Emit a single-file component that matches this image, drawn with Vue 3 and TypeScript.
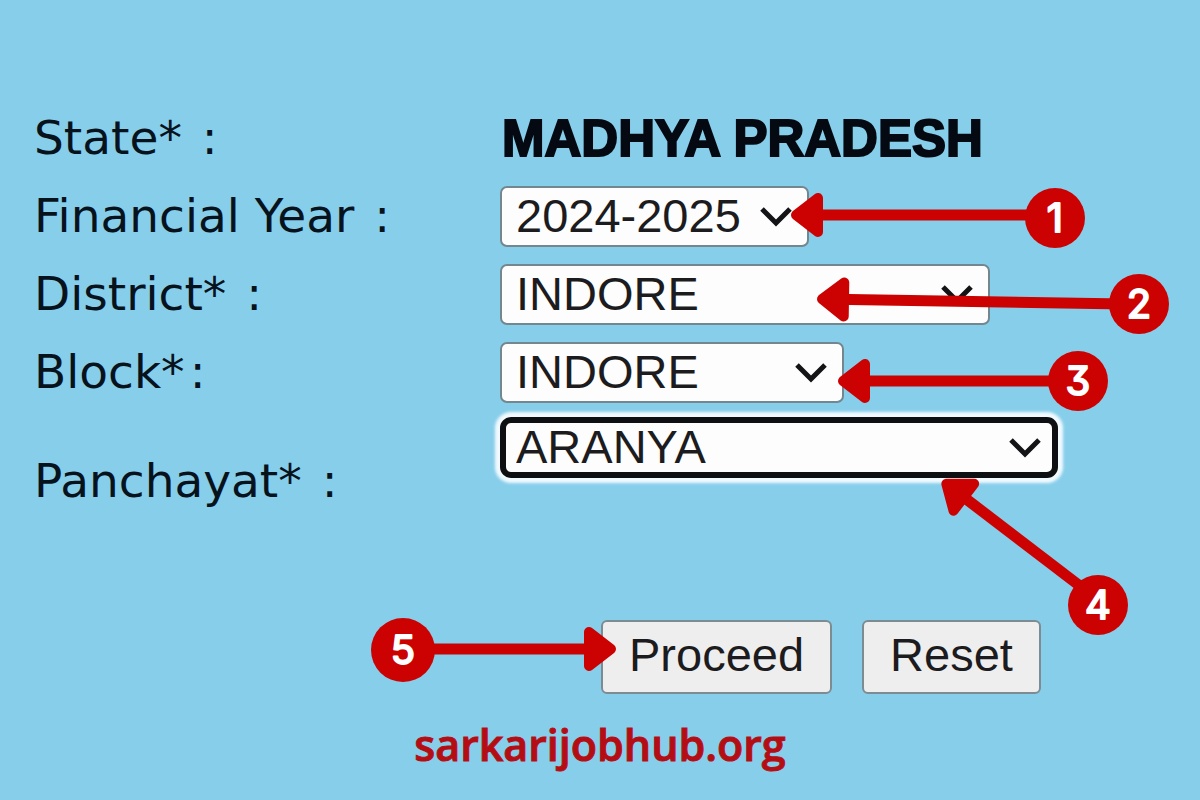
<script setup lang="ts">
import { reactive } from 'vue'

interface Field {
  id: string
  label: string
  size: string
  options: string[]
}

interface Callout {
  step: number
  cx: number
  cy: number
  r: number
  tipX: number
  tipY: number
  tailX: number
  tailY: number
}

const fields: Field[] = [
  { id: 'year', label: 'Financial Year ', size: 'small', options: ['2024-2025'] },
  { id: 'district', label: 'District* ', size: 'large', options: ['INDORE'] },
  { id: 'block', label: 'Block*', size: 'medium', options: ['INDORE'] },
  { id: 'panchayat', label: 'Panchayat* ', size: 'full', options: ['ARANYA'] },
]

const values = reactive<Record<string, string>>({
  year: '2024-2025',
  district: 'INDORE',
  block: 'INDORE',
  panchayat: 'ARANYA',
})

const callouts: Callout[] = [
  { step: 1, cx: 1055, cy: 218, r: 30, tipX: 788, tipY: 215, tailX: 1040, tailY: 215 },
  { step: 2, cx: 1139, cy: 304, r: 30, tipX: 814, tipY: 299, tailX: 1125, tailY: 304 },
  { step: 3, cx: 1078, cy: 381, r: 30, tipX: 835, tipY: 381, tailX: 1060, tailY: 381 },
  { step: 4, cx: 1098, cy: 605, r: 30, tipX: 940, tipY: 479, tailX: 1080, tailY: 586 },
  { step: 5, cx: 403, cy: 650, r: 32, tipX: 619, tipY: 649, tailX: 420, tailY: 649 },
]

function length(c: Callout): number {
  return Math.hypot(c.tailX - c.tipX, c.tailY - c.tipY)
}

function placement(c: Callout): string {
  const angle = (Math.atan2(c.tailY - c.tipY, c.tailX - c.tipX) * 180) / Math.PI
  return `translate(${c.tipX} ${c.tipY}) rotate(${angle})`
}
</script>

<template>
  <main class="page">
    <form class="form" @submit.prevent>
      <div class="row">
        <span class="label">State* <span class="colon">:</span></span>
        <strong class="state">MADHYA PRADESH</strong>
      </div>
      <div v-for="f in fields" :key="f.id" class="row" :class="{ last: f.id === 'panchayat' }">
        <label class="label" :for="f.id">{{ f.label }}<span class="colon">:</span></label>
        <div class="control" :class="f.size">
          <select :id="f.id" v-model="values[f.id]" class="select">
            <option v-for="o in f.options" :key="o">{{ o }}</option>
          </select>
          <svg class="chevron" viewBox="0 0 32 20" aria-hidden="true">
            <path d="M2 2 L16 16 L30 2" />
          </svg>
        </div>
      </div>
      <div class="actions">
        <button type="submit" class="button">Proceed</button>
        <button type="reset" class="button">Reset</button>
      </div>
    </form>
    <footer class="footer">sarkarijobhub.org</footer>

    <svg class="callouts" width="1200" height="800" viewBox="0 0 1200 800">
      <g v-for="c in callouts" :key="c.step">
        <g :transform="placement(c)">
          <line class="shaft" x1="20" y1="0" :x2="length(c)" y2="0" />
          <path class="head" d="M8 0 L30 -17 V17 Z" />
        </g>
        <circle class="disc" :cx="c.cx" :cy="c.cy" :r="c.r" />
        <text class="digit" :x="c.cx" :y="c.cy + 14">{{ c.step }}</text>
      </g>
    </svg>
  </main>
</template>

<style>
body {
  margin: 0;
  background: #87ceeb;
}
</style>

<style scoped>
.page {
  position: relative;
  box-sizing: border-box;
  min-height: 100vh;
  padding-top: 108px;
  background: #87ceeb;
  font-family: "Liberation Sans", Arial, sans-serif;
}

.form {
  display: flex;
  flex-direction: column;
  gap: 17px;
  padding-left: 34px;
}

.row {
  display: grid;
  grid-template-columns: 466px 1fr;
  align-items: center;
  min-height: 61px;
}

.row.last {
  min-height: 95px;
  margin-top: -3px;
  align-items: start;
}

.row.last .label {
  align-self: end;
}

.label {
  padding-bottom: 2px;
  color: #06121c;
  font: 47px/59px "DejaVu Sans", Verdana, sans-serif;
  white-space: nowrap;
}

.colon {
  padding: 0 5px;
}

.state {
  padding-left: 2px;
  color: #050a12;
  font-size: 51px;
  line-height: 61px;
  white-space: nowrap;
  -webkit-text-stroke: 2px #050a12;
}

.control {
  position: relative;
  height: 61px;
}

.small {
  width: 309px;
}

.medium {
  width: 344px;
}

.large {
  width: 490px;
}

.full {
  width: 558px;
}

.select {
  appearance: none;
  display: block;
  box-sizing: border-box;
  width: 100%;
  height: 100%;
  margin: 0;
  padding: 0 14px 2px;
  border: 2px solid #74868e;
  border-radius: 7px;
  background: #fdfdfd;
  color: #1c1c20;
  font: 47px/54px "Liberation Sans", Arial, sans-serif;
}

.full .select {
  padding: 0 10px 2px;
  border: 6px solid #0e0f12;
  border-radius: 11px;
  line-height: 46px;
  box-shadow: 0 0 3px 5px #f1fafe;
}

.chevron {
  position: absolute;
  top: 21px;
  right: 17px;
  width: 32px;
  height: 20px;
  fill: none;
  stroke: #141416;
  stroke-width: 5;
  pointer-events: none;
}

.actions {
  display: flex;
  gap: 30px;
  margin-top: 91px;
  padding-left: 567px;
}

.button {
  height: 74px;
  padding: 0 26px 4px;
  border: 2px solid #7d8c93;
  border-radius: 6px;
  background: #efeeee;
  color: #1c1c20;
  font: 47px/64px "Liberation Sans", Arial, sans-serif;
}

.footer {
  margin-top: 22px;
  color: #b50d14;
  font: 600 43px/58px "Open Sans", "Noto Sans", sans-serif;
  text-align: center;
  -webkit-text-stroke: 1px #b50d14;
}

.callouts {
  position: absolute;
  top: 0;
  left: 0;
  pointer-events: none;
}

.shaft {
  stroke: #cc0202;
  stroke-width: 11;
}

.head {
  fill: #cc0202;
  stroke: #cc0202;
  stroke-width: 10;
  stroke-linejoin: round;
}

.disc {
  fill: #cc0202;
}

.digit {
  fill: #fff;
  stroke: #fff;
  stroke-width: 2;
  stroke-linejoin: round;
  font: 400 40px Inter, sans-serif;
  font-feature-settings: "cv09";
  text-anchor: middle;
}
</style>
